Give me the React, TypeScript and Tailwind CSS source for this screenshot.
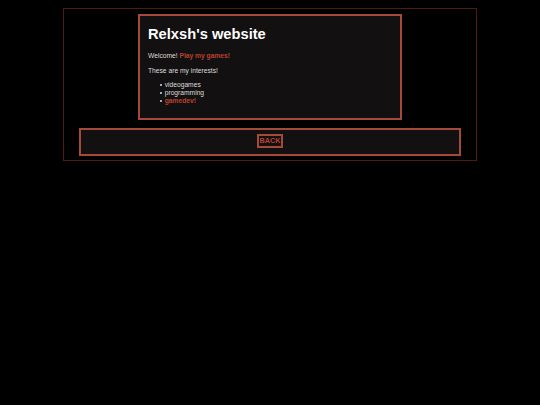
const INTERESTS = [
  { label: 'videogames', hot: false },
  { label: 'programming', hot: false },
  { label: 'gamedev!', hot: true },
];

export default function App() {
  return (
    <div className="min-h-screen bg-black pt-2 font-['Liberation_Sans',Arial,sans-serif] text-[#dcdcdc]">
      <div className="mx-auto w-[414px] border border-[#4e1c14] px-[15px] pt-[5px] pb-[4px]">
        {/* Main card */}
        <div className="mx-auto h-[106px] w-[264px] border-2 border-[#a54a3a] bg-[#121010] px-2 pt-[10px]">
          <h1 className="text-[14.7px] font-bold leading-[17px] text-white">Relxsh's website</h1>
          <p className="mt-[9px] text-[6.7px] leading-[7.7px]">
            Welcome! <a className="font-bold text-[#b8432f]">Play my games!</a>
          </p>
          <p className="mt-[7px] text-[6.7px] leading-[7.7px]">These are my interests!</p>
          <ul className="mt-[6.8px] text-[6.7px] leading-[8px]">
            {INTERESTS.map(({ label, hot }) => (
              <li key={label} className="flex items-center pl-[12px]">
                <span className="mr-[2.7px] h-[2px] w-[2px] rounded-full bg-[#dcdcdc]" />
                <span className={hot ? 'font-bold text-[#b8432f]' : ''}>{label}</span>
              </li>
            ))}
          </ul>
        </div>

        {/* Footer */}
        <div className="mt-2 flex h-[28px] items-start justify-center border-2 border-[#a54a3a] bg-[#121010] pt-[4px]">
          <button className="h-[14px] w-[26px] border-2 border-[#a54a3a] text-[7.2px] leading-[10px] font-bold text-[#b8432f]">
            BACK
          </button>
        </div>
      </div>
    </div>
  );
}
